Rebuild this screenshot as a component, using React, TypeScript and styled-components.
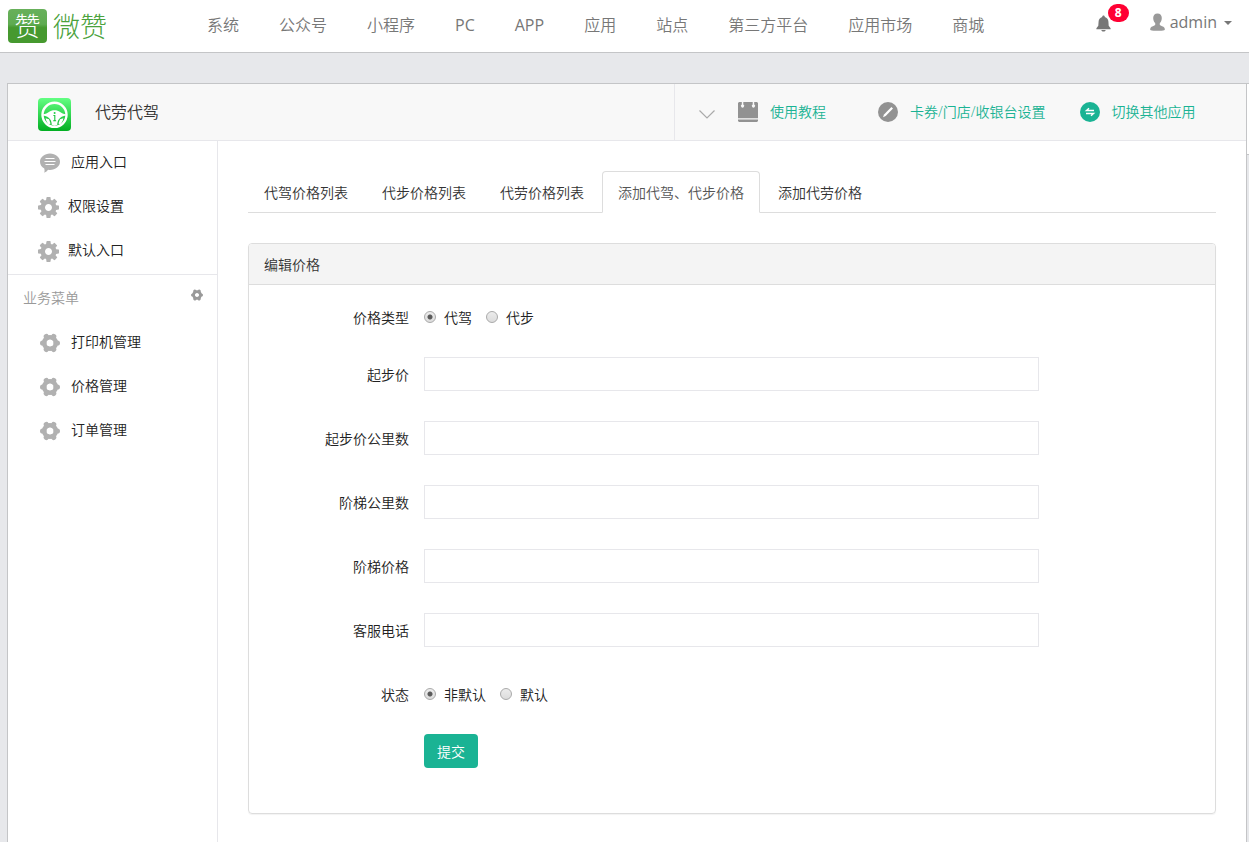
import React from "react";
import styled, { createGlobalStyle } from "styled-components";

const GlobalStyle = createGlobalStyle`
  * { box-sizing: border-box; }
  body {
    margin: 0;
    background: #e7e8eb;
    color: #333;
    font: 350 14px/20px "Open Sans", "Noto Sans CJK SC", sans-serif;
  }
  a { color: inherit; text-decoration: none; }
  button, input { font: inherit; }
`;

const Page = styled.div`
  min-height: 100vh;
  display: flex;
  flex-direction: column;
`;

const TopBar = styled.header`
  display: flex;
  align-items: center;
  height: 53px;
  padding: 0 17px 0 8px;
  background: #fff;
  border-bottom: 1px solid #c4c5c7;
`;

const Brand = styled.a`
  display: flex;
  align-items: center;
  gap: 6px;
  width: 199px;
  color: #4aa23c;
  font-size: 27px;
  line-height: 34px;
  font-weight: 300;
  font-family: "Noto Sans CJK SC", sans-serif;
`;

const BrandMark = styled.span`
  width: 39px;
  height: 34px;
  border-radius: 4px;
  background: linear-gradient(#68b05b 0, #5fab51 45%, #46992f 55%, #46992f 100%);
  color: #fff;
  font-size: 26px;
  line-height: 32px;
  text-align: center;
`;

const MainNav = styled.nav`
  display: flex;
  flex: 1;
  gap: 40px;
  padding-bottom: 2px;
  color: #777;
  font-size: 16px;
  line-height: 24px;
  white-space: nowrap;
`;

const NavLink = styled.a<{ $latin: boolean }>`
  font-weight: ${(p) => (p.$latin ? 400 : 350)};
`;

const UserArea = styled.div`
  display: flex;
  align-items: center;
  gap: 39px;
  padding-bottom: 8px;
  color: #777;
`;

const BellButton = styled.button`
  position: relative;
  display: flex;
  padding: 2px 0 0;
  border: 0;
  background: none;
  color: #777;
`;

const Badge = styled.span`
  position: absolute;
  left: 12px;
  top: -9px;
  width: 21px;
  height: 18px;
  border-radius: 9px;
  background: #ff0033;
  color: #fff;
  font-size: 12px;
  line-height: 18px;
  font-weight: 700;
  text-align: center;
`;

const UserButton = styled.button`
  display: flex;
  align-items: center;
  gap: 5px;
  padding: 0;
  border: 0;
  background: none;
  color: #777;
  font-size: 16px;
  line-height: 24px;
  font-weight: 400;
`;

const Caret = styled.span`
  margin-left: 2px;
  margin-top: 2px;
  border: 4px solid transparent;
  border-top-color: #777;
  border-bottom: 0;
`;

const Workspace = styled.div`
  display: flex;
  flex: 1;
  align-items: stretch;
  margin: 30px 0 0 7px;
`;

const AppFrame = styled.div`
  display: flex;
  flex-direction: column;
  flex: 1;
  min-width: 0;
  background: #fff;
  border: 1px solid #c4c5c7;
  border-bottom: 0;
`;

const EdgeTab = styled.div`
  width: 2px;
  height: 72px;
  background: #fff;
  border: solid #c4c5c7;
  border-width: 1px 0;
`;

const AppHeader = styled.div`
  display: flex;
  height: 57px;
  background: #f8f8f8;
  border-bottom: 1px solid #e7e7eb;
`;

const AppTitle = styled.h1`
  display: flex;
  align-items: center;
  flex: 1;
  gap: 24px;
  margin: 0;
  padding: 4px 0 0 30px;
  font-size: 16px;
  line-height: 24px;
  font-weight: 350;
`;

const AppName = styled.span`
  padding-bottom: 4px;
`;

const Tools = styled.div`
  display: flex;
  align-items: center;
  width: 572px;
  padding-left: 24px;
  border-left: 1px solid #e7e7eb;
`;

const Toggle = styled.button`
  display: flex;
  margin-right: 23px;
  padding: 4px 0 0;
  border: 0;
  background: none;
  color: #aaa;
`;

const ToolLinks = styled.nav`
  display: flex;
  gap: 34px;
`;

const ToolLink = styled.a`
  display: flex;
  align-items: center;
  gap: 12px;
  min-width: 106px;
  color: #1ab394;
  white-space: nowrap;
`;

const Columns = styled.div`
  display: flex;
  flex: 1;
`;

const Sidebar = styled.aside`
  width: 210px;
  border-right: 1px solid #e7e7eb;
`;

const MenuGroup = styled.nav`
  padding-bottom: 1px;
  & + & { border-top: 1px solid #e7e7eb; }
`;

const MenuTitle = styled.div`
  display: flex;
  align-items: center;
  justify-content: space-between;
  height: 46px;
  padding: 0 14px 0 15px;
  color: #999;
`;

const MenuSettings = styled.button`
  display: flex;
  padding: 0 0 6px;
  border: 0;
  background: none;
  color: #999;
`;

const MenuItem = styled.a<{ $wide?: boolean }>`
  display: flex;
  align-items: center;
  gap: ${(p) => (p.$wide ? 9 : 11)}px;
  height: 44px;
  padding: 0 0 2px ${(p) => (p.$wide ? 30 : 32)}px;
  color: #222;
  svg { color: #b1b1b1; flex: none; margin-top: 2px; }
`;

const Content = styled.main`
  flex: 1;
  min-width: 0;
  padding: 30px 30px 28px;
`;

const Tabs = styled.nav`
  display: flex;
  gap: 2px;
  margin-bottom: 30px;
  border-bottom: 1px solid #ddd;
`;

const Tab = styled.a<{ $active?: boolean }>`
  margin-bottom: -1px;
  padding: 11px 15px 9px;
  border: 1px solid ${(p) => (p.$active ? "#ddd" : "transparent")};
  border-bottom-color: ${(p) => (p.$active ? "#fff" : "transparent")};
  border-radius: 4px 4px 0 0;
  color: ${(p) => (p.$active ? "#555" : "#333")};
  white-space: nowrap;
`;

const Card = styled.section`
  border: 1px solid #ddd;
  border-radius: 4px;
  box-shadow: 0 1px 1px rgba(0, 0, 0, 0.05);
`;

const CardTitle = styled.h2`
  margin: 0;
  padding: 11px 15px 9px;
  background: #f4f4f4;
  border-bottom: 1px solid #ddd;
  border-radius: 3px 3px 0 0;
  font-size: 14px;
  line-height: 20px;
  font-weight: 350;
`;

const Form = styled.form`
  padding: 15px 0;
`;

const FormRow = styled.div`
  display: grid;
  grid-template-columns: 160px 4fr 1fr;
  margin-bottom: 30px;
`;

const Label = styled.label`
  padding-top: 9px;
  line-height: 18px;
  text-align: right;
  color: #222;
`;

const Field = styled.div`
  padding: 0 15px;
  grid-column: 2;
`;

const TextInput = styled.input`
  display: block;
  width: 100%;
  height: 34px;
  padding: 6px 12px;
  border: 1px solid #e7e7eb;
  border-radius: 0;
  background: #fff;
  outline: 0;
`;

const Choices = styled.div`
  display: flex;
  gap: 14px;
  padding-top: 9px;
`;

const Choice = styled.label`
  display: flex;
  align-items: center;
  gap: 8px;
  line-height: 18px;
  color: #222;
`;

const Radio = styled.input`
  appearance: none;
  width: 12px;
  height: 12px;
  margin: 0 0 2px;
  border: 1px solid #aaa;
  border-radius: 50%;
  background: linear-gradient(#ececec, #dcdcdc);
  &:checked {
    background: radial-gradient(circle, #5a5a5a 0 2px, transparent 3px), linear-gradient(#ececec, #dcdcdc);
  }
`;

const Submit = styled.button`
  display: block;
  height: 34px;
  padding: 2px 13px 0;
  border: 0;
  border-radius: 4px;
  background: #1ab394;
  color: #fff;
`;

const BellIcon = () => (
  <svg width="15" height="17" viewBox="0 0 15 17" fill="currentColor">
    <path d="M7.500 0.500c.8 0 1.300.6 1.300 1.400 2.200.6 3.500 2.300 3.600 4.700l.3 4.200 1.900 2.500v.9H.400v-.9l1.900-2.500.3-4.200C2.700 4.200 4 2.500 6.200 1.900c0-.8.5-1.400 1.300-1.400zM5.300 14.900h4.400c-.3 1-1.100 1.600-2.200 1.600s-1.900-.6-2.200-1.600z" />
  </svg>
);

const UserIcon = () => (
  <svg width="15" height="18" viewBox="0 0 15 18" fill="#999">
    <path d="M7.500 0.400c2.800 0 4.300 1.800 4.300 4.500 0 2.200-.8 4-2 5.100v2c.7.8 3.800 1.400 4.600 2.700.4.700.4 1.400.4 2.200-2 .7-4.600.9-7.300.9s-5.300-.2-7.300-.9c0-.8 0-1.500.4-2.200.8-1.300 3.900-1.900 4.600-2.700v-2c-1.200-1.100-2-2.900-2-5.100 0-2.700 1.500-4.500 4.300-4.500z" />
  </svg>
);

const WheelIcon = () => (
  <svg width="33" height="33" viewBox="0 0 33 33">
    <defs>
      <linearGradient id="wheelBg" x1="0" y1="0" x2="0" y2="1">
        <stop offset="0" stopColor="#63ff83" />
        <stop offset="1" stopColor="#02ae22" />
      </linearGradient>
    </defs>
    <rect width="33" height="33" rx="4" fill="url(#wheelBg)" />
    <circle cx="16.500" cy="16.800" r="12" fill="none" stroke="#fff" strokeWidth="2.400" />
    <path
      fill="#fff"
      d="M5 16.200c2.600-.2 4.300-1 5.900-2.200 1.600-1.200 3.300-1.700 5.600-1.700s4 .5 5.600 1.700c1.600 1.200 3.300 2 5.900 2.200v1.400c-3.200.3-5.800 1.600-7.300 4-1.100 1.700-1.400 3.500-1.400 5.400l-2.800.8-2.800-.8c0-1.900-.3-3.700-1.400-5.400-1.500-2.400-4.100-3.700-7.300-4z"
    />
    <path fill="#fff" d="M7.600 20.300l3.400 1 1.600 4.200-1.800 1.100c-1.600-1.500-2.700-3.600-3.200-6.300zM25.400 20.300l-3.400 1-1.600 4.200 1.800 1.100c1.600-1.500 2.700-3.600 3.200-6.300z" />
    <circle cx="16.600" cy="15" r="1" fill="#22cf46" />
    <path d="M15.400 17.500h1.400v5M15.200 22.700h2.900" fill="none" stroke="#18c53b" strokeWidth="1.100" />
  </svg>
);

const ChevronIcon = () => (
  <svg width="16" height="9" viewBox="0 0 16 9" fill="none" stroke="currentColor" strokeWidth="1.200">
    <path d="M0.500 0.500 8 8l7.500-7.500" />
  </svg>
);

const BookIcon = () => (
  <svg width="20" height="20" viewBox="0 0 20 20" fill="#929292">
    <path d="M1 0h2.800v2.500a1.600 1.600 0 1 0 1.500 0V0h9.400v2.500a1.600 1.600 0 1 0 1.500 0V0H19l1 1v15.300H0V1z" />
    <path d="M0 17.500h20V19l-1 1H1l-1-1z" />
  </svg>
);

const PencilIcon = () => (
  <svg width="20" height="20" viewBox="0 0 20 20">
    <circle cx="10" cy="10" r="10" fill="#929292" />
    <path d="M13.400 4.900 15 6.500 7.700 14 5 15.200 6 12.400z" fill="#fff" />
  </svg>
);

const SwitchIcon = () => (
  <svg width="20" height="20" viewBox="0 0 20 20">
    <circle cx="10" cy="10" r="10" fill="#1ab394" />
    <path d="M14 8.500H6.500L9 6.300M6 11.500h7.500L11 13.700" fill="none" stroke="#fff" strokeWidth="1.400" />
  </svg>
);

const CommentIcon = () => (
  <svg width="20" height="20" viewBox="0 0 20 20">
    <path
      fill="currentColor"
      d="M10 .5c5.500 0 10 3.700 10 8.300s-4.500 8.200-10 8.200c-.7 0-1.300 0-1.900-.2C7.300 18 6 19 4.300 19.700c.4-1.300.4-2.600 0-4.100C1.700 14.100 0 11.600 0 8.800 0 4.200 4.500.5 10 .5z"
    />
    <path d="M5.500 5.500h9M4.500 8.500h11M5.500 11.500h9" stroke="#fff" strokeWidth="1" />
  </svg>
);

const CogIcon = () => (
  <svg width="21" height="21" viewBox="0 -128 1536 1536" fill="currentColor">
    <path d="M1024 640q0-106-75-181t-181-75-181 75-75 181 75 181 181 75 181-75 75-181zm512-109v222q0 12-8 23t-20 13l-185 28q-19 54-39 91 35 50 107 138 10 12 10 25t-9 23q-27 37-99 108t-94 71q-12 0-26-9l-138-108q-44 23-91 38-16 136-29 186-7 28-36 28h-222q-14 0-24.500-8.500t-11.500-21.500l-28-184q-49-16-90-37l-141 107q-10 9-25 9-14 0-25-11-126-114-165-168-7-10-7-23 0-12 8-23 15-21 51-66.500t54-70.500q-27-50-41-99l-183-27q-13-2-21-12.500t-8-23.500v-222q0-12 8-23t19-13l186-28q14-46 39-92-40-57-107-138-10-12-10-24 0-10 9-23 26-36 98.500-107.500t94.500-71.500q13 0 26 10l138 107q44-23 91-38 16-136 29-186 7-28 36-28h222q14 0 24.500 8.500t11.500 21.500l28 184q49 16 90 37l142-107q9-9 24-9 13 0 25 10 129 119 165 170 7 8 7 22 0 12-8 23-15 21-51 66.500t-54 70.500q26 50 41 98l183 28q13 2 21 12.500t8 23.500z" />
  </svg>
);

const LobeGearIcon = ({ size = 20 }: { size?: number }) => (
  <svg width={size} height={size} viewBox="0 0 20 20" fill="none" stroke="currentColor">
    <circle cx="10" cy="10" r="5.800" strokeWidth="4.600" />
    {[0, 60, 120, 180, 240, 300].map((a) => (
      <path key={a} d="M16.200 10h1.200" strokeWidth="5.200" strokeLinecap="round" transform={`rotate(${a} 10 10)`} />
    ))}
  </svg>
);

const navItems = ["系统", "公众号", "小程序", "PC", "APP", "应用", "站点", "第三方平台", "应用市场", "商城"];
const tabs = ["代驾价格列表", "代步价格列表", "代劳价格列表", "添加代驾、代步价格", "添加代劳价格"];
const textFields = [
  ["startPrice", "起步价"],
  ["startKm", "起步价公里数"],
  ["stepKm", "阶梯公里数"],
  ["stepPrice", "阶梯价格"],
  ["phone", "客服电话"],
];

const RadioRow = ({ name, label, options }: { name: string; label: string; options: string[] }) => (
  <FormRow role="radiogroup" aria-labelledby={`${name}-label`}>
    <Label as="span" id={`${name}-label`}>{label}</Label>
    <Field>
      <Choices>
        {options.map((o, i) => (
          <Choice key={o}>
            <Radio type="radio" name={name} value={o} defaultChecked={i === 0} />
            {o}
          </Choice>
        ))}
      </Choices>
    </Field>
  </FormRow>
);

export default function App() {
  return (
    <Page>
      <GlobalStyle />
      <TopBar>
        <Brand href="#">
          <BrandMark>赞</BrandMark>
          微赞
        </Brand>
        <MainNav>
          {navItems.map((n) => (
            <NavLink key={n} href="#" $latin={/^[A-Z]+$/.test(n)}>{n}</NavLink>
          ))}
        </MainNav>
        <UserArea>
          <BellButton type="button" aria-label="消息">
            <BellIcon />
            <Badge>8</Badge>
          </BellButton>
          <UserButton type="button">
            <UserIcon />
            admin
            <Caret />
          </UserButton>
        </UserArea>
      </TopBar>
      <Workspace>
        <AppFrame>
          <AppHeader>
            <AppTitle>
              <WheelIcon />
              <AppName>代劳代驾</AppName>
            </AppTitle>
            <Tools>
              <Toggle type="button" aria-label="展开">
                <ChevronIcon />
              </Toggle>
              <ToolLinks>
                <ToolLink href="#"><BookIcon />使用教程</ToolLink>
                <ToolLink href="#"><PencilIcon />卡券/门店/收银台设置</ToolLink>
                <ToolLink href="#"><SwitchIcon />切换其他应用</ToolLink>
              </ToolLinks>
            </Tools>
          </AppHeader>
          <Columns>
            <Sidebar>
              <MenuGroup>
                <MenuItem href="#"><CommentIcon />应用入口</MenuItem>
                <MenuItem href="#" $wide><CogIcon />权限设置</MenuItem>
                <MenuItem href="#" $wide><CogIcon />默认入口</MenuItem>
              </MenuGroup>
              <MenuGroup>
                <MenuTitle>
                  业务菜单
                  <MenuSettings type="button" aria-label="菜单设置">
                    <LobeGearIcon size={12} />
                  </MenuSettings>
                </MenuTitle>
                <MenuItem href="#"><LobeGearIcon />打印机管理</MenuItem>
                <MenuItem href="#"><LobeGearIcon />价格管理</MenuItem>
                <MenuItem href="#"><LobeGearIcon />订单管理</MenuItem>
              </MenuGroup>
            </Sidebar>
            <Content>
              <Tabs>
                {tabs.map((t, i) => (
                  <Tab key={t} href="#" $active={i === 3}>{t}</Tab>
                ))}
              </Tabs>
              <Card>
                <CardTitle>编辑价格</CardTitle>
                <Form onSubmit={(e) => e.preventDefault()}>
                  <RadioRow name="priceType" label="价格类型" options={["代驾", "代步"]} />
                  {textFields.map(([id, label]) => (
                    <FormRow key={id}>
                      <Label htmlFor={id}>{label}</Label>
                      <Field>
                        <TextInput id={id} type="text" />
                      </Field>
                    </FormRow>
                  ))}
                  <RadioRow name="status" label="状态" options={["非默认", "默认"]} />
                  <FormRow>
                    <Field>
                      <Submit type="submit">提交</Submit>
                    </Field>
                  </FormRow>
                </Form>
              </Card>
            </Content>
          </Columns>
        </AppFrame>
        <EdgeTab />
      </Workspace>
    </Page>
  );
}
